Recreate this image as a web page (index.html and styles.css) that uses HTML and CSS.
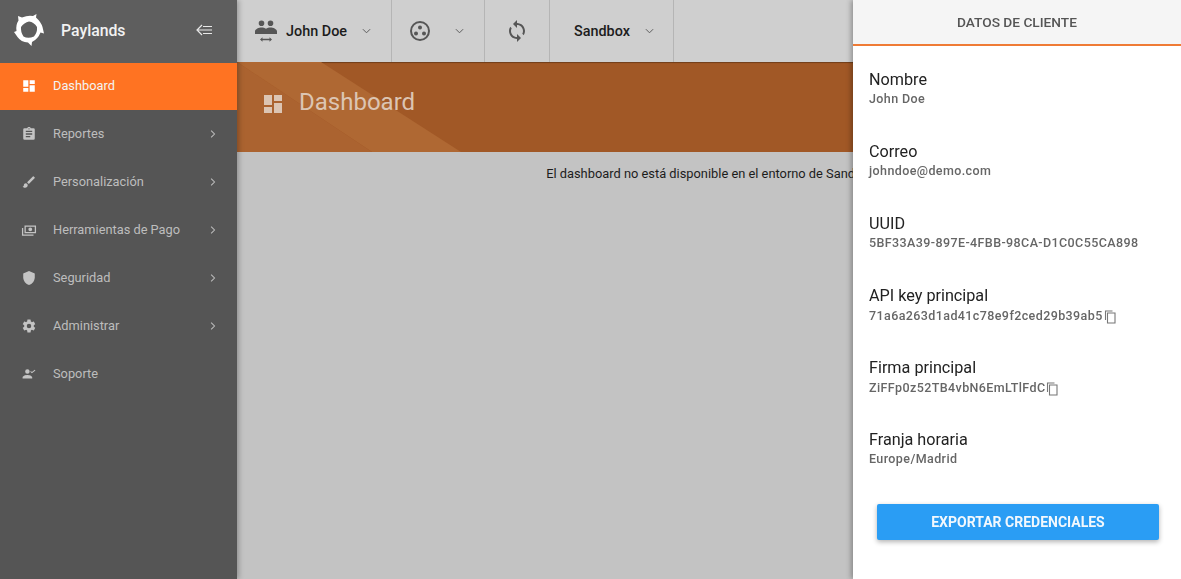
FILE: index.html
```html
<!DOCTYPE html>
<html lang="es">
<head>
  <meta charset="UTF-8" />
  <title>Paylands</title>
  <link rel="stylesheet" href="styles.css">
</head>
<body>
  <div class="app">
    <aside class="sidebar">
      <div class="brand">
        <svg class="logo" viewBox="0 0 32 32" width="32" height="32">
          <path fill="#fff" fill-rule="evenodd" d="M23.500 0L23 3.500Q28 8 29.500 13L31 19.500 27.500 18.500Q25 25 19 28L18.500 32 15 28.500Q8 28 4.500 23L1 18 3.500 17Q2.500 11 5.500 6.500L5 2 9 3.500Q15 1 20 2zM16 7.500Q11 8.500 8 13 7.500 18 10.500 22.500 15 25 21 22.500 24.500 18.500 24 13 21 8 16 7.500z"/>
        </svg>
        <span class="brand-name">Paylands</span>
        <svg class="collapse" viewBox="0 0 16 12" width="16" height="12">
          <path fill="none" stroke="#e8e8e8" stroke-width="1.200" d="M6 1L1 6l5 5M2 6h14M7 2.500h9M7 9.500h9"/>
        </svg>
      </div>
      <nav class="menu">
        <a class="menu-item active">
          <svg class="menu-icon" viewBox="0 0 24 24"><path d="M3 13h8V3H3zm0 8h8v-6H3zm10 0h8V11h-8zm0-18v6h8V3z"/></svg>
          <span>Dashboard</span>
        </a>
        <a class="menu-item">
          <svg class="menu-icon" viewBox="0 0 24 24"><path d="M19 3h-4.180C14.400 1.840 13.300 1 12 1s-2.400.84-2.820 2H5a2 2 0 0 0-2 2v14a2 2 0 0 0 2 2h14a2 2 0 0 0 2-2V5a2 2 0 0 0-2-2zm-7 0a1 1 0 1 1 0 2 1 1 0 0 1 0-2zm2 14H7v-2h7zm3-4H7v-2h10zm0-4H7V7h10z"/></svg>
          <span>Reportes</span>
          <svg class="chevron" viewBox="0 0 8 12"><path d="M1.500 1.500L6 6l-4.500 4.500"/></svg>
        </a>
        <a class="menu-item">
          <svg class="menu-icon" viewBox="0 0 24 24"><path d="M7 14c-1.660 0-3 1.340-3 3 0 1.310-1.160 2-2 2 .92 1.220 2.490 2 4 2 2.210 0 4-1.790 4-4 0-1.660-1.340-3-3-3zm13.710-9.370l-1.340-1.340a1 1 0 0 0-1.410 0L9 12.250 11.750 15l8.960-8.960a1 1 0 0 0 0-1.410z"/></svg>
          <span>Personalización</span>
          <svg class="chevron" viewBox="0 0 8 12"><path d="M1.500 1.500L6 6l-4.500 4.500"/></svg>
        </a>
        <a class="menu-item">
          <svg class="menu-icon" viewBox="0 0 24 24"><path fill-rule="evenodd" d="M5 5h18v12H5zm2 2v8h14V7zm7 1a3 3 0 1 1 0 6 3 3 0 0 1 0-6zM1 9h2v10h16v2H1z"/></svg>
          <span>Herramientas de Pago</span>
          <svg class="chevron" viewBox="0 0 8 12"><path d="M1.500 1.500L6 6l-4.500 4.500"/></svg>
        </a>
        <a class="menu-item">
          <svg class="menu-icon" viewBox="0 0 24 24"><path d="M12 1L3 5v6c0 5.550 3.840 10.740 9 12 5.160-1.260 9-6.450 9-12V5z"/></svg>
          <span>Seguridad</span>
          <svg class="chevron" viewBox="0 0 8 12"><path d="M1.500 1.500L6 6l-4.500 4.500"/></svg>
        </a>
        <a class="menu-item">
          <svg class="menu-icon" viewBox="0 0 24 24"><path d="M19.430 12.980c.04-.32.070-.64.070-.98s-.03-.66-.07-.98l2.110-1.650c.19-.15.240-.42.120-.64l-2-3.460c-.12-.22-.39-.3-.61-.22l-2.490 1c-.52-.4-1.080-.73-1.690-.98l-.38-2.650A.49.490 0 0 0 14 2h-4c-.25 0-.46.18-.49.420l-.38 2.650c-.61.25-1.170.59-1.690.98l-2.490-1c-.23-.09-.49 0-.61.22l-2 3.460c-.13.22-.07.49.12.64l2.110 1.650c-.04.32-.07.65-.07.98s.03.66.07.98l-2.110 1.650c-.19.15-.24.42-.12.64l2 3.460c.12.22.39.3.61.22l2.490-1c.52.4 1.080.73 1.690.98l.38 2.650c.03.24.24.42.49.42h4c.25 0 .46-.18.49-.42l.38-2.650c.61-.25 1.170-.59 1.690-.98l2.490 1c.23.09.49 0 .61-.22l2-3.460c.12-.22.07-.49-.12-.64zM12 15.500a3.500 3.500 0 1 1 0-7 3.500 3.500 0 0 1 0 7z"/></svg>
          <span>Administrar</span>
          <svg class="chevron" viewBox="0 0 8 12"><path d="M1.500 1.500L6 6l-4.500 4.500"/></svg>
        </a>
        <a class="menu-item">
          <svg class="menu-icon" viewBox="0 0 24 24"><path d="M9.500 11.500a3.500 3.500 0 1 0 0-7 3.500 3.500 0 0 0 0 7zM2 19v-1.500c0-2.500 5-3.800 7.500-3.800s7.500 1.300 7.500 3.800V19zM16.500 11l-2.500-2.500 1-1 1.500 1.500L21 5.500l1 1z"/></svg>
          <span>Soporte</span>
        </a>
      </nav>
    </aside>

    <main class="main">
      <header class="topbar">
        <div class="top-section user">
          <svg class="top-icon" viewBox="0 0 24 24" width="24" height="24"><path d="M7.500 1.500a2.800 2.800 0 1 1 0 5.600 2.800 2.800 0 0 1 0-5.600zm9 0a2.800 2.800 0 1 1 0 5.600 2.800 2.800 0 0 1 0-5.600zM1 15v-2.500C1 10 5 8.500 7.500 8.500c1.700 0 3.300.5 4.500 1.200 1.200-.7 2.800-1.200 4.500-1.200 2.500 0 6.500 1.500 6.500 4V15zM6 20.500l2.500-2.200v1.500h7v-1.500l2.500 2.200-2.500 2.200v-1.500h-7v1.500z"/></svg>
          <b>John Doe</b>
          <svg class="caret" viewBox="0 0 10 6"><path d="M1 1l4 4 4-4"/></svg>
        </div>
        <div class="top-section org">
          <svg class="top-icon" viewBox="0 0 24 24" width="24" height="24"><path fill-rule="evenodd" d="M12 2a10 10 0 1 1 0 20 10 10 0 0 1 0-20zm0 2a8 8 0 1 0 0 16 8 8 0 0 0 0-16zM12 6.500a2 2 0 1 1 0 4 2 2 0 0 1 0-4zM8 12.500a2 2 0 1 1 0 4 2 2 0 0 1 0-4zM16 12.500a2 2 0 1 1 0 4 2 2 0 0 1 0-4z"/></svg>
          <svg class="caret" viewBox="0 0 10 6"><path d="M1 1l4 4 4-4"/></svg>
        </div>
        <div class="top-section sync">
          <svg class="top-icon" viewBox="0 0 24 24" width="24" height="24"><path d="M12 4V1L8 5l4 4V6c3.310 0 6 2.690 6 6 0 1.010-.25 1.970-.7 2.800l1.460 1.460A7.930 7.930 0 0 0 20 12c0-4.420-3.580-8-8-8zm0 14c-3.310 0-6-2.690-6-6 0-1.010.25-1.970.7-2.800L5.240 7.740A7.930 7.930 0 0 0 4 12c0 4.420 3.580 8 8 8v3l4-4-4-4z"/></svg>
        </div>
        <div class="top-section env">
          <b>Sandbox</b>
          <svg class="caret" viewBox="0 0 10 6"><path d="M1 1l4 4 4-4"/></svg>
        </div>
      </header>
      <section class="hero">
        <svg class="hero-icon" viewBox="3 3 18 18" width="18" height="18"><path d="M3 13h8V3H3zm0 8h8v-6H3zm10 0h8V11h-8zm0-18v6h8V3z"/></svg>
        <h1>Dashboard</h1>
      </section>
      <p class="notice">El dashboard no está disponible en el entorno de Sandbox</p>
    </main>
  </div>

  <aside class="panel">
    <div class="panel-title">DATOS DE CLIENTE</div>
    <div class="panel-body">
      <div class="field">
        <div class="field-label">Nombre</div>
        <div class="field-value">John Doe</div>
      </div>
      <div class="field">
        <div class="field-label">Correo</div>
        <div class="field-value">johndoe@demo.com</div>
      </div>
      <div class="field">
        <div class="field-label">UUID</div>
        <div class="field-value">5BF33A39-897E-4FBB-98CA-D1C0C55CA898</div>
      </div>
      <div class="field">
        <div class="field-label">API key principal</div>
        <div class="field-value">71a6a263d1ad41c78e9f2ced29b39ab5<svg class="copy" viewBox="0 0 12 14" width="12" height="14"><path d="M8.500 1H1.500v9M3.500 3h7.500v10h-7.500z"/></svg></div>
      </div>
      <div class="field">
        <div class="field-label">Firma principal</div>
        <div class="field-value">ZiFFp0z52TB4vbN6EmLTlFdC<svg class="copy" viewBox="0 0 12 14" width="12" height="14"><path d="M8.500 1H1.500v9M3.500 3h7.500v10h-7.500z"/></svg></div>
      </div>
      <div class="field">
        <div class="field-label">Franja horaria</div>
        <div class="field-value">Europe/Madrid</div>
      </div>
      <button class="export">EXPORTAR CREDENCIALES</button>
    </div>
  </aside>
</body>
</html>
```

FILE: styles.css
```css
* { margin:0; padding:0; box-sizing:border-box }
html, body { width:100%; height:100%; overflow:hidden }
body { font-family:Roboto,"Liberation Sans",sans-serif; background:#c3c3c3; color:#1c1c1c }

.app { display:flex; height:100% }

/* sidebar */
.sidebar { width:237px; flex:none; background:#555; box-shadow:2px 0 5px rgba(0,0,0,.25); position:relative; z-index:2 }
.brand { height:63px; display:flex; align-items:center; padding:0 25px 3px 13px; background:#5e5e5e }
.logo { flex:none }
.brand-name { margin-left:16px; font-size:15.800px; font-weight:500; color:#f2f2f2; flex:1 }
.menu-item { height:48px; display:flex; align-items:center; padding:0 21px 0 22px; font-size:12.800px; color:#bdbdbd }
.menu-item.active { background:#ff7322; color:#f3f3f3; height:47px; padding-bottom:2px }
.menu-item span { margin-left:17px; flex:1; padding-bottom:1px }
.menu-icon { width:14px; height:14px; fill:#c4c4c4; flex:none; transform:scale(1.100) }
.active .menu-icon { fill:#fff }
.chevron { width:6px; height:10px; fill:none; stroke:#bdbdbd; stroke-width:1.400; flex:none }

/* top bar and page */
.main { flex:1; min-width:0 }
.topbar { height:62px; display:flex; background:#cfcfcf; color:#1c1c1c; font-size:14.400px }
.top-section { display:flex; align-items:center; border-right:1px solid #b5b5b5; height:62px }
.top-section b { font-weight:500 }
.top-icon { fill:#565656; flex:none }
.caret { width:9px; height:6px; fill:none; stroke:#5c5c5c; stroke-width:1.100; flex:none }
.user { width:155px; padding-left:17px }
.user b { margin-left:8px }
.user .caret { margin-left:15px }
.org { width:93px; padding-left:16px }
.org .caret { margin-left:23px }
.sync { width:65px; padding-left:20px }
.env { width:124px; padding-left:24px }
.env .caret { margin-left:15px }

.hero {
  height:90px; display:flex; align-items:center; padding:0 0 11px 27px; color:#dcc5b3;
  background:#a15826;
  position:relative; overflow:hidden;
  box-shadow:inset 0 1px 1px rgba(0,0,0,.3);
}
.hero::before {
  content:""; position:absolute; left:0; top:0; width:224px; height:90px;
  background:#af6833;
  clip-path:polygon(0 0, 84px 0, 224px 90px, 135px 90px);
}
.hero::after {
  content:""; position:absolute; left:0; top:0; width:135px; height:90px;
  background:#ab6330;
  clip-path:polygon(0 0, 135px 90px, 0 90px);
}
.hero-icon { fill:#dcc5b3; flex:none; margin-top:5px; position:relative; z-index:1 }
.hero h1 { margin-left:17px; font-size:24px; font-weight:400; position:relative; z-index:1 }
.notice { text-align:center; font-size:12.850px; margin-top:14px; padding-left:4px; color:#1c1c1c }

/* client data panel */
.panel { position:fixed; top:0; right:0; bottom:0; width:328px; background:#fff; box-shadow:-2px 0 5px rgba(0,0,0,.3); z-index:5 }
.panel-title { height:46px; background:#f5f5f5; border-bottom:2px solid #ef7b35; text-align:center; line-height:44px; font-size:13.700px; font-weight:500; color:#555 }
.panel-body { padding:24px 16px 0 }
.field { height:72px }
.field-label { font-size:16.200px; line-height:19px; color:#222 }
.field-value { font-size:12.500px; font-weight:500; color:#666; line-height:16px; margin-top:2px; letter-spacing:.4px; display:flex; align-items:center }
.copy { fill:none; stroke:#777; stroke-width:1.100; margin:3px 0 0 1px; flex:none }
.export { display:block; width:282px; height:36px; margin:2px 0 0 8px; background:#2a9df4; color:#f2f8fd; border:none; border-radius:2px; font-family:inherit; font-size:14px; font-weight:700; box-shadow:0 2px 5px rgba(0,0,0,.3) }
```
